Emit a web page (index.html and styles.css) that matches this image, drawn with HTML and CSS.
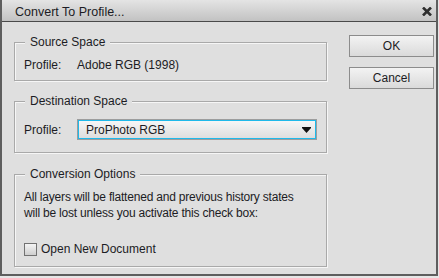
FILE: index.html
```html
<!DOCTYPE html>
<html lang="en">
<head>
    <meta charset="UTF-8" />
    <title>Convert To Profile</title>
    <link rel="stylesheet" href="styles.css">
</head>
<body>
    <div class="dialog">
        <div class="titlebar">
            <span class="title">Convert To Profile...</span>
            <svg class="close" width="10" height="9" viewBox="0 0 10 9">
                <path d="M1 0.5 L9 8.5 M9 0.5 L1 8.5" stroke="#2e2e2e" stroke-width="2.6" />
            </svg>
        </div>
        <div class="content">
            <div class="groups">
                <fieldset class="group group-source">
                    <legend>Source Space</legend>
                    <div class="row">
                        <span class="label">Profile:</span>
                        <span>Adobe RGB (1998)</span>
                    </div>
                </fieldset>

                <fieldset class="group group-dest">
                    <legend>Destination Space</legend>
                    <div class="row">
                        <span class="label">Profile:</span>
                        <div class="select">
                            <span>ProPhoto RGB</span>
                            <svg class="arrow" width="9" height="6" viewBox="0 0 9 6">
                                <path d="M0 0 H9 V1 L4.5 6 L0 1 Z" fill="#111" />
                            </svg>
                        </div>
                    </div>
                </fieldset>

                <fieldset class="group group-options">
                    <legend>Conversion Options</legend>
                    <p class="note">All layers will be flattened and previous history states<br>will be lost unless you activate this check box:</p>
                    <label class="check-row">
                        <span class="checkbox"></span>
                        <span>Open New Document</span>
                    </label>
                </fieldset>
            </div>
            <div class="buttons">
                <button>OK</button>
                <button>Cancel</button>
            </div>
        </div>
    </div>
</body>
</html>
```

FILE: styles.css
```css
body {
    margin: 0;
    background-color: #e6e6e6;
    font-family: "Liberation Sans", Arial, sans-serif;
    font-size: 12px;
    color: #1c1c24;
}
.dialog {
    width: 434px;
    background-color: #dfdfdf;
    border: 2px solid #5e5e5e;
    border-top: none;
}
.titlebar {
    height: 21px;
    display: flex;
    align-items: center;
    justify-content: space-between;
    padding: 0 4px 0 13px;
    background: linear-gradient(#e4e4e4, #c2c2c2);
    border-bottom: 1px solid #4a4a4a;
}
.title {
    font-size: 12.5px;
    padding-top: 2px;
}
.close {
    display: block;
    margin-top: 2px;
}
.content {
    display: flex;
    gap: 22px;
    padding: 13px 0 7px 12px;
}
.groups {
    width: 313px;
}
.group {
    margin: 0;
    padding: 9px 9px 8px;
    border: 1px solid #a9a9a9;
    box-shadow: 1px 1px 0 #f6f6f6, inset 1px 1px 0 #f6f6f6;
    min-width: 0;
}
.group legend {
    padding: 0 5px;
    margin-left: 1px;
    line-height: 14px;
    background-color: #dfdfdf;
}
.group-dest {
    margin-top: 13px;
    padding-top: 11px;
    padding-bottom: 12px;
}
.group-options {
    margin-top: 14px;
    padding-top: 8px;
    padding-bottom: 10px;
}
.row {
    display: flex;
    align-items: center;
    min-height: 14px;
    line-height: 14px;
}
.label {
    width: 53px;
    flex-shrink: 0;
}
.select {
    flex: 1;
    height: 17px;
    display: flex;
    align-items: center;
    justify-content: space-between;
    padding: 0 4px 0 7px;
    border: 1px solid #1fb9ea;
    box-shadow: 0 0 0 1px #9d9d9d;
    margin: 1px;
    background: linear-gradient(#f6f6f6, #dedede);
}
.arrow {
    display: block;
    margin-top: 1px;
}
.note {
    margin: 0;
    line-height: 16px;
    letter-spacing: -0.2px;
}
.check-row {
    display: flex;
    align-items: center;
    gap: 4px;
    margin-top: 21px;
    line-height: 14px;
}
.checkbox {
    width: 11px;
    height: 11px;
    border: 1px solid #727272;
    background: linear-gradient(#f4f4f4, #cfcfcf);
}
.buttons {
    display: flex;
    flex-direction: column;
    gap: 10px;
}
button {
    width: 85px;
    height: 22px;
    padding: 0;
    border: 1px solid #8c8c8c;
    background: linear-gradient(#f3f3f3, #dadada);
    font-family: "Liberation Sans", Arial, sans-serif;
    font-size: 12px;
    color: #1c1c24;
}
```
